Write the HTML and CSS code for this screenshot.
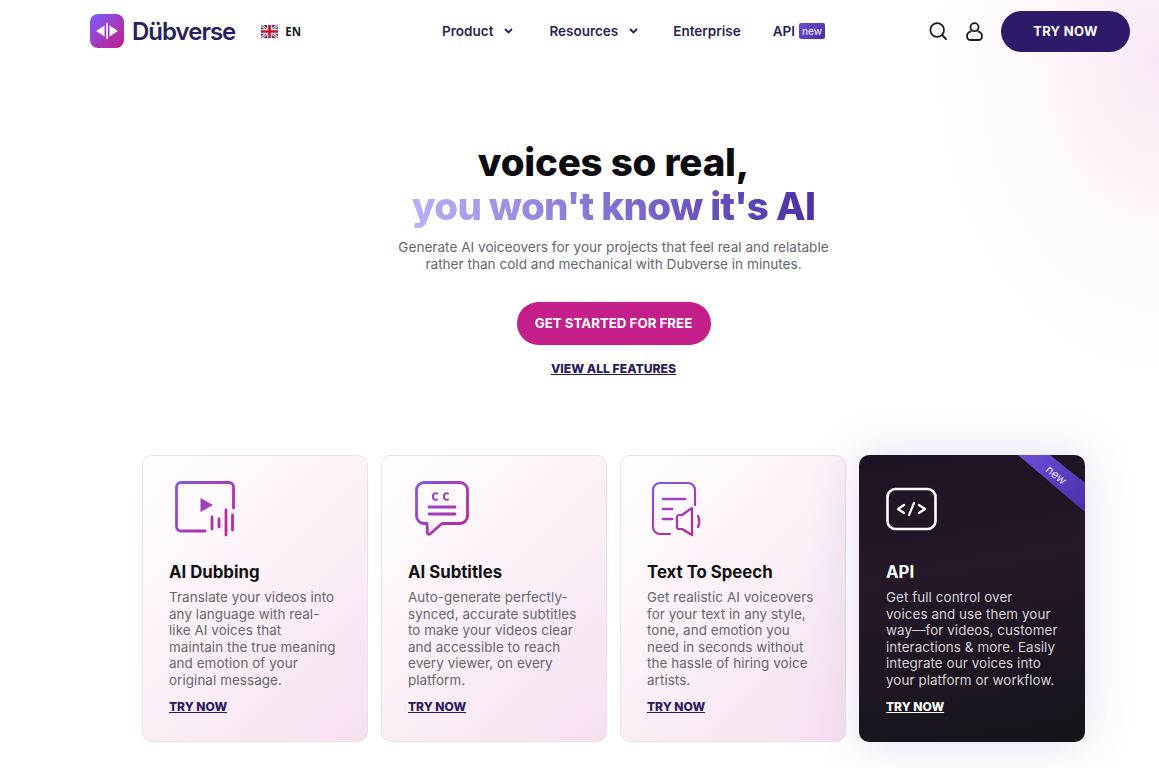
FILE: index.html
```html
<!DOCTYPE html>
<html lang="en">
<head>
    <meta charset="UTF-8">
    <title>Dubverse</title>
    <link rel="stylesheet" href="styles.css">
</head>
<body>
    <header class="topbar">
        <a class="logo" href="#">
            <span class="logo-mark">
                <svg width="34" height="34" viewBox="0 0 34 34">
                    <path d="M14.500 11.500v11l-8.500-5.500z" fill="#fff"/>
                    <path d="M19.500 11.500v11l8.500-5.500z" fill="#fff"/>
                    <rect x="16.200" y="9" width="1.600" height="16" fill="#fff"/>
                </svg>
            </span>
            <span class="logo-text">Dübverse</span>
        </a>
        <div class="lang">
            <svg width="17" height="13" viewBox="0 0 17 13">
                <rect width="17" height="13" fill="#2c3a78"/>
                <path d="M0 0l17 13M17 0L0 13" stroke="#fff" stroke-width="2.600"/>
                <path d="M0 0l17 13M17 0L0 13" stroke="#c8102e" stroke-width="1"/>
                <path d="M8.500 0v13M0 6.500h17" stroke="#fff" stroke-width="4.400"/>
                <path d="M8.500 0v13M0 6.500h17" stroke="#c8102e" stroke-width="2.600"/>
            </svg>
            <span>EN</span>
        </div>
        <nav class="nav">
            <a href="#" class="nav-link">Product
                <svg class="chev" width="9" height="6" viewBox="0 0 9 6"><path d="M1 1l3.500 3.500L8 1" fill="none" stroke="#2a1f55" stroke-width="1.800"/></svg>
            </a>
            <a href="#" class="nav-link">Resources
                <svg class="chev" width="9" height="6" viewBox="0 0 9 6"><path d="M1 1l3.500 3.500L8 1" fill="none" stroke="#2a1f55" stroke-width="1.800"/></svg>
            </a>
            <a href="#" class="nav-link nav-enterprise">Enterprise</a>
            <a href="#" class="nav-link">API <span class="badge">new</span></a>
        </nav>
        <div class="actions">
            <svg class="search-icon" width="18" height="18" viewBox="0 0 18 18">
                <circle cx="8.200" cy="8" r="6.800" fill="none" stroke="#1b1b1f" stroke-width="1.700"/>
                <path d="M13.200 13l3.800 4.200" stroke="#1b1b1f" stroke-width="1.900" stroke-linecap="round"/>
            </svg>
            <svg class="user-icon" width="17" height="19" viewBox="0 0 17 19">
                <circle cx="8.500" cy="5.200" r="4" fill="none" stroke="#1b1b1f" stroke-width="1.800"/>
                <path d="M5.500 9.200C2.800 10 1 11.800 1 14.200 1 16.600 2.600 18 5 18h7c2.400 0 4-1.400 4-3.800 0-2.400-1.800-4.200-4.500-5" fill="none" stroke="#1b1b1f" stroke-width="1.800"/>
            </svg>
            <a href="#" class="btn-try">TRY NOW</a>
        </div>
    </header>

    <main class="content">
        <section class="hero">
            <h1>voices so real,<br><span class="grad-text">you won't know it's AI</span></h1>
            <p>Generate AI voiceovers for your projects that feel real and relatable<br>rather than cold and mechanical with Dubverse in minutes.</p>
            <a href="#" class="btn-start">GET STARTED FOR FREE</a>
            <a href="#" class="link-all">VIEW ALL FEATURES</a>
        </section>

        <section class="cards">
            <div class="card">
                <svg class="card-icon" width="68" height="56" viewBox="-6 0 68 56" fill="none" stroke="url(#g1)" stroke-width="2.800" stroke-linecap="round" stroke-linejoin="round">
                    <defs>
                        <linearGradient id="g1" gradientUnits="userSpaceOnUse" x1="0" y1="0" x2="60" y2="54">
                            <stop offset="0" stop-color="#7d5be8"/>
                            <stop offset="1" stop-color="#c4218a"/>
                        </linearGradient>
                    </defs>
                    <path d="M30 50H6a4.500 4.500 0 0 1-4.500-4.500V6A4.500 4.500 0 0 1 6 1.500h48A4.500 4.500 0 0 1 58.500 6v21"/>
                    <path d="M25.500 17l12.500 7-12.500 7z" fill="url(#g1)" stroke="none"/>
                    <path d="M37 36v12M44 38v8M51 29v25M57.500 34v15"/>
                </svg>
                <h3>AI Dubbing</h3>
                <p>Translate your videos into any language with real-like AI voices that maintain the true meaning and emotion of your original message.</p>
                <a href="#" class="card-link">TRY NOW</a>
            </div>
            <div class="card">
                <svg class="card-icon" width="68" height="56" viewBox="-7 0 68 56" fill="none" stroke="url(#g2)" stroke-width="2.800" stroke-linecap="round" stroke-linejoin="round">
                    <defs>
                        <linearGradient id="g2" gradientUnits="userSpaceOnUse" x1="0" y1="0" x2="54" y2="54">
                            <stop offset="0" stop-color="#7d5be8"/>
                            <stop offset="1" stop-color="#c4218a"/>
                        </linearGradient>
                    </defs>
                    <path d="M9 1.500h36A7.500 7.500 0 0 1 52.500 9v26a7.500 7.500 0 0 1-7.500 7.500H27L15 53q-2 1-2.500-1l-.5-9.500H9A7.500 7.500 0 0 1 1.500 35V9A7.500 7.500 0 0 1 9 1.500z"/>
                    <path d="M22 12.500a3 3 0 0 0-4 1.500v3a3 3 0 0 0 4 1.500M33 12.500a3 3 0 0 0-4 1.500v3a3 3 0 0 0 4 1.500" stroke-width="2"/>
                    <path d="M14 26h26M14 33h26"/>
                </svg>
                <h3>AI Subtitles</h3>
                <p>Auto-generate perfectly-synced, accurate subtitles to make your videos clear and accessible to reach every viewer, on every platform.</p>
                <a href="#" class="card-link">TRY NOW</a>
            </div>
            <div class="card">
                <svg class="card-icon" width="62" height="56" viewBox="0 0 62 56" fill="none" stroke="url(#g3)" stroke-width="2.200" stroke-linecap="round" stroke-linejoin="round">
                    <defs>
                        <linearGradient id="g3" gradientUnits="userSpaceOnUse" x1="5" y1="0" x2="52" y2="54">
                            <stop offset="0" stop-color="#7d5be8"/>
                            <stop offset="1" stop-color="#c4218a"/>
                        </linearGradient>
                    </defs>
                    <path d="M23 53H13a7 7 0 0 1-7-7V9a7 7 0 0 1 7-7h28a7 7 0 0 1 7 7v15"/>
                    <path d="M16 18h22M16 28h9M16 38h9" stroke-width="2.600"/>
                    <path d="M45 27L35 34h-3a2 2 0 0 0-2 2v10a2 2 0 0 0 2 2h3l10 6z"/>
                    <path d="M51 35q2.500 6 0 11"/>
                </svg>
                <h3>Text To Speech</h3>
                <p>Get realistic AI voiceovers for your text in any style, tone, and emotion you need in seconds without the hassle of hiring voice artists.</p>
                <a href="#" class="card-link">TRY NOW</a>
            </div>
            <div class="card card-dark">
                <div class="ribbon"></div>
                <span class="ribbon-text">new</span>
                <svg class="card-icon" width="62" height="56" viewBox="0 0 62 56" fill="none" stroke="#fff" stroke-width="2.600" stroke-linecap="round" stroke-linejoin="round">
                    <rect x="1.500" y="8" width="48" height="40" rx="8"/>
                    <path d="M18 24l-6 4 6 4M33 24l6 4-6 4M28 22l-5 12" stroke-width="2.200"/>
                </svg>
                <h3>API</h3>
                <p>Get full control over<br>voices and use them your<br>way—for videos, customer<br>interactions &amp; more. Easily<br>integrate our voices into<br>your platform or workflow.</p>
                <a href="#" class="card-link">TRY NOW</a>
            </div>
        </section>
    </main>
</body>
</html>
```

FILE: styles.css
```css
html, body {
    height: 100%;
}

body {
    margin: 0;
    overflow: hidden;
    font-family: 'Inter', 'Liberation Sans', sans-serif;
    color: #1b1b1f;
    background:
        radial-gradient(ellipse 230px 320px at 100% 60px, rgba(246, 222, 240, 0.7) 0%, rgba(250, 236, 246, 0.4) 50%, rgba(255, 255, 255, 0) 100%),
        #fff;
}

a {
    text-decoration: none;
    color: inherit;
}

/* Top bar */
.topbar {
    display: flex;
    align-items: center;
    height: 62px;
    padding: 0 29px 0 90px;
}

.logo {
    display: flex;
    align-items: center;
    gap: 8px;
}

.logo-mark {
    display: block;
    width: 34px;
    height: 34px;
    border-radius: 8px;
    background: linear-gradient(135deg, #7a5cff 0%, #c41e85 100%);
}

.logo-text {
    font-size: 24px;
    font-weight: 600;
    letter-spacing: -1px;
    color: #2a1f5c;
}

.lang {
    display: flex;
    align-items: center;
    gap: 7px;
    margin-left: 26px;
    font-family: 'Open Sans', sans-serif;
    font-size: 11.5px;
    font-weight: 700;
}

.nav {
    display: flex;
    align-items: center;
    gap: 36px;
    margin-left: 141px;
    font-size: 13.5px;
    font-weight: 600;
    color: #2a1f55;
}

.nav-link {
    display: flex;
    align-items: center;
}

.nav-enterprise {
    margin: 0 -4px 0 -1px;
}

.chev {
    margin-left: 11px;
}

.badge {
    width: 26px;
    height: 16px;
    margin-left: 4px;
    border-radius: 2px;
    line-height: 16px;
    text-align: center;
    font-size: 10px;
    font-weight: 500;
    color: #e4dcff;
    background: linear-gradient(135deg, #6a4fd0, #4a2fa8);
}

.actions {
    display: flex;
    align-items: center;
    margin-left: auto;
}

.user-icon {
    margin-left: 19px;
}

.btn-try {
    margin-left: 18px;
    width: 129px;
    height: 41px;
    line-height: 41px;
    border-radius: 21px;
    text-align: center;
    font-size: 13px;
    font-weight: 700;
    letter-spacing: 0.3px;
    color: #fff;
    background: #2d1b69;
}

/* Hero */
.content {
    width: 943px;
    margin-left: 142px;
}

.hero {
    display: flex;
    flex-direction: column;
    align-items: center;
    padding-top: 78px;
    text-align: center;
}

.hero h1 {
    margin: 0;
    font-size: 38.5px;
    line-height: 44px;
    font-weight: 800;
    letter-spacing: -0.2px;
    color: #0c0c10;
}

.grad-text {
    letter-spacing: -0.7px;
    background: linear-gradient(to right, #bcaef7 0%, #4a2fa8 100%);
    -webkit-background-clip: text;
    background-clip: text;
    color: transparent;
}

.hero p {
    margin: 11px 0 0;
    font-size: 13.6px;
    line-height: 16.5px;
    color: #66666c;
}

.btn-start {
    margin-top: 30px;
    width: 194px;
    height: 43px;
    line-height: 43px;
    border-radius: 22px;
    font-size: 13.3px;
    font-weight: 700;
    color: #fff;
    background: #c41e8a;
}

.link-all {
    margin-top: 16px;
    font-size: 12.2px;
    font-weight: 800;
    text-decoration: underline;
    color: #2a1a60;
}

/* Cards */
.cards {
    display: grid;
    grid-template-columns: repeat(4, 226px);
    gap: 13px;
    margin-top: 79px;
}

.card {
    position: relative;
    box-sizing: border-box;
    height: 287px;
    padding: 25px 26px 0;
    border: 1px solid #eedfec;
    border-radius: 10px;
    background: linear-gradient(135deg, #fff 0%, #fbf0f8 50%, #f6e0ef 100%);
}

.card-icon {
    display: block;
}

.card h3 {
    margin: 23px 0 0;
    font-size: 16.8px;
    line-height: 24px;
    font-weight: 700;
    color: #111;
}

.card p {
    max-width: 170px;
    margin: 5px 0 0;
    font-size: 13.4px;
    line-height: 16.5px;
    letter-spacing: 0.08px;
    color: #66666c;
}

.card-link {
    display: inline-block;
    margin-top: 11px;
    font-size: 12px;
    font-weight: 800;
    text-decoration: underline;
    color: #2a1a60;
}

.card-dark {
    border: none;
    padding: 26px 27px 0;
    background: linear-gradient(170deg, #1c1322 0%, #241829 40%, #17141a 100%);
    box-shadow: 0 0 50px rgba(110, 80, 170, 0.2);
}

.card-dark h3 {
    color: #fff;
}

.card-dark p {
    max-width: none;
    white-space: nowrap;
    color: #d5d2d8;
}

.card-dark .card-link {
    color: #fff;
}

.ribbon {
    position: absolute;
    top: 0;
    right: 0;
    width: 67px;
    height: 57px;
    clip-path: polygon(0 0, 32px 0, 100% 28px, 100% 100%);
    background: linear-gradient(135deg, #6a4ed8, #4a2fa8);
}

.ribbon-text {
    position: absolute;
    top: 13px;
    right: 17px;
    transform: rotate(40deg);
    font-size: 11.5px;
    color: #e8e2ff;
}
```
